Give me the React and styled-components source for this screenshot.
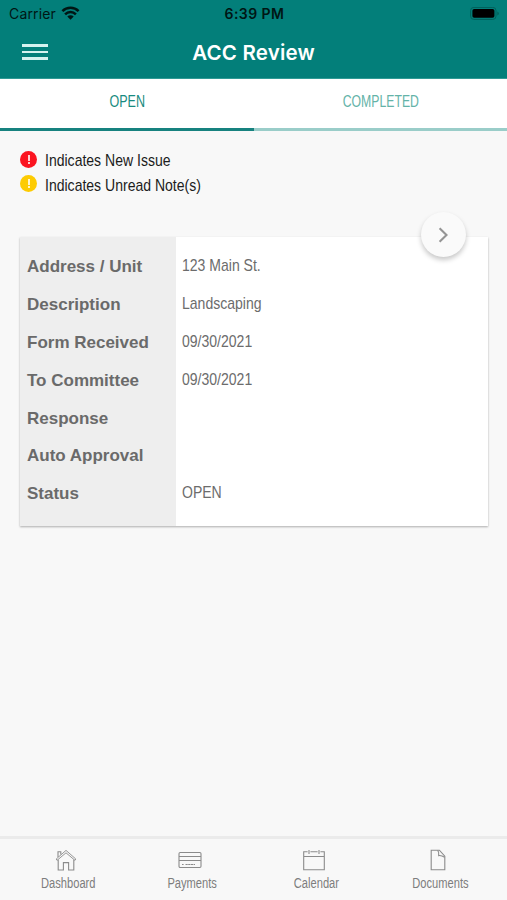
import React from 'react'
import styled, { createGlobalStyle } from 'styled-components'

const rows = [
  { label: 'Address / Unit', value: '123 Main St.' },
  { label: 'Description', value: 'Landscaping' },
  { label: 'Form Received', value: '09/30/2021' },
  { label: 'To Committee', value: '09/30/2021' },
  { label: 'Response', value: '' },
  { label: 'Auto Approval', value: '' },
  { label: 'Status', value: 'OPEN' },
]

const HomeIcon = () => (
  <svg width="24" height="24" viewBox="0 0 24 24">
    <path d="M4.2 11.8V22h5.2v-7.4h5.2V22h5.2V11.8" />
    <path d="M3 12.4 2.2 11 12 2.4l9.8 8.6-.8 1.4L12 4.8z" strokeWidth="0.9" />
    <path d="M4 8.9V3.8h2.8v2.7" />
  </svg>
)

const CardIcon = () => (
  <svg width="24" height="24" viewBox="0 0 24 24">
    <rect x="1" y="4.5" width="22" height="15" rx="1.2" />
    <path d="M1 8.5h22M1 12.5h22" />
    <path d="M4 16.5h1.6M7.5 16.5h9.5" strokeDasharray="2.2 0.5" />
  </svg>
)

const CalendarIcon = () => (
  <svg width="24" height="24" viewBox="0 0 24 24">
    <path d="M5.6 3.7H1.7v18h20.6v-18h-3.9M8.4 3.7h7.2M1.7 8.5h20.6M7 2v4M17 2v4" />
  </svg>
)

const DocumentIcon = () => (
  <svg width="24" height="24" viewBox="0 0 24 24">
    <path d="M5.2 2.2h8.2l5.4 5.9v13.7H5.2z" />
    <path d="M11.6 2.4q1.6 1.4 1.1 5.2 3-.3 5.9 1.6" />
  </svg>
)

const tabs = [
  { name: 'Dashboard', icon: <HomeIcon /> },
  { name: 'Payments', icon: <CardIcon /> },
  { name: 'Calendar', icon: <CalendarIcon /> },
  { name: 'Documents', icon: <DocumentIcon /> },
]

const App = () => {
  return (
    <>
      <GlobalStyle />
      <Screen>
        <Header>
          <StatusBar>
            <Carrier>
              Carrier
              <svg width="19" height="14" viewBox="0 0 19 14">
                <path d="M1.4 5.2a11.5 11.5 0 0 1 16.2 0M4.1 8.3a7.6 7.6 0 0 1 10.8 0" />
                <path d="M9.5 13.7 6.3 10.5a4.5 4.5 0 0 1 6.4 0z" />
              </svg>
            </Carrier>
            <Clock>6:39 PM</Clock>
            <Battery>
              <svg width="30" height="14" viewBox="0 0 30 14">
                <rect x="0.6" y="0.4" width="25.4" height="12" rx="3.2" fill="none" stroke="#00605a" />
                <rect x="2.4" y="2" width="22" height="8.8" rx="1.8" fill="#000" />
                <path d="M27.3 4.4v4q1.5-.5 1.5-2t-1.5-2z" fill="#00605a" />
              </svg>
            </Battery>
          </StatusBar>
          <TitleBar>
            <MenuButton aria-label="Menu">
              <span />
              <span />
              <span />
            </MenuButton>
            <Title>ACC Review</Title>
          </TitleBar>
        </Header>

        <Segments>
          <Segment $active>
            <Narrow $origin="center" $scale={0.8}>OPEN</Narrow>
          </Segment>
          <Segment>
            <Narrow $origin="center" $scale={0.78}>COMPLETED</Narrow>
          </Segment>
        </Segments>

        <Content>
          <Legend>
            <LegendRow>
              <Badge $color="#fb1420">
                <i />
              </Badge>
              <Narrow>Indicates New Issue</Narrow>
            </LegendRow>
            <LegendRow>
              <Badge $color="#fdcb02">
                <i />
              </Badge>
              <Narrow>Indicates Unread Note(s)</Narrow>
            </LegendRow>
          </Legend>

          <Card>
            <Labels>
              {rows.map((row) => (
                <Label key={row.label}>{row.label}</Label>
              ))}
            </Labels>
            <Values>
              {rows.map((row) => (
                <Value key={row.label}>
                  <Narrow>{row.value}</Narrow>
                </Value>
              ))}
            </Values>
            <NextButton aria-label="Next">
              <svg width="12" height="18" viewBox="0 0 12 18">
                <path d="M1.6 2.2 8.5 9l-6.9 6.8" fill="none" stroke="#959595" strokeWidth="2.1" />
              </svg>
            </NextButton>
          </Card>
        </Content>

        <TabBar>
          {tabs.map((tab) => (
            <Tab key={tab.name}>
              {tab.icon}
              <Narrow $origin="center" $scale={0.795}>{tab.name}</Narrow>
            </Tab>
          ))}
        </TabBar>
      </Screen>
    </>
  )
}

const GlobalStyle = createGlobalStyle`
    *{
        box-sizing: border-box;
    }

    body{
        margin: 0;
        font-family: 'Liberation Sans', sans-serif;
    }

    button{
        border: 0;
        padding: 0;
        background: none;
        font-family: inherit;
    }
`

/* condensed text */
const Narrow = styled.span`
    display: inline-block;
    white-space: nowrap;
    transform: scaleX(${(p) => p.$scale || 0.825});
    transform-origin: ${(p) => p.$origin || 'left'};
`

const Screen = styled.div`
    display: flex;
    flex-direction: column;
    width: 507px;
    height: 900px;
    background-color: #f8f8f8;
    overflow: hidden;
`

const Header = styled.header`
    height: 79px;
    flex: none;
    background-color: #037f7a;
    border-bottom: 1px solid #2f9a95;
`

const StatusBar = styled.div`
    display: grid;
    grid-template-columns: 1fr auto 1fr;
    align-items: center;
    height: 27px;
    padding: 0 7px 0 9px;
    font-family: Inter, sans-serif;
    font-size: 14px;
    color: #001614;
`

const Carrier = styled.div`
    display: flex;
    align-items: center;
    gap: 5px;
    letter-spacing: 0.15px;

    svg{
        margin-top: -2px;
        fill: none;
        stroke: #001614;
        stroke-width: 2.5;
    }

    path:last-child{
        fill: #001614;
        stroke: none;
    }
`

const Clock = styled.div`
    font-weight: 600;
    letter-spacing: 0.45px;
`

const Battery = styled.div`
    display: flex;
    justify-content: flex-end;
`

const TitleBar = styled.div`
    display: grid;
    grid-template-columns: 60px 1fr 60px;
    align-items: center;
    height: 50px;
`

const MenuButton = styled.button`
    display: flex;
    flex-direction: column;
    gap: 4px;
    width: 26px;
    margin-left: 22px;

    span{
        height: 2.5px;
        background-color: #d5f3f0;
    }
`

const Title = styled.h1`
    margin: 0;
    text-align: center;
    font-family: Inter, sans-serif;
    font-size: 20.5px;
    font-weight: 600;
    letter-spacing: 0.2px;
    color: #fff;
`

const Segments = styled.nav`
    display: flex;
    height: 52px;
    flex: none;
    background-color: #fff;
`

const Segment = styled.button`
    flex: 1;
    padding: 0 0 4px 1px;
    font-size: 15.7px;
    color: ${(p) => (p.$active ? '#188b80' : '#64b3a8')};
    border-bottom: 3px solid ${(p) => (p.$active ? '#17827f' : '#9acdc9')};
`

const Content = styled.main`
    flex: 1;
    padding: 18px 19px 0 20px;
`

const Legend = styled.div`
    height: 88px;
`

const LegendRow = styled.div`
    display: flex;
    align-items: center;
    gap: 8px;
    height: 24.5px;
    font-size: 17px;
    color: #1c1c1c;
`

const Badge = styled.span`
    display: flex;
    flex-direction: column;
    align-items: center;
    justify-content: center;
    gap: 1px;
    width: 17px;
    height: 17px;
    margin-bottom: 4px;
    border-radius: 50%;
    background-color: ${(p) => p.$color};

    i{
        width: 2px;
        height: 6px;
        background-color: rgba(255, 255, 255, 0.8);
    }

    &::after{
        content: '';
        width: 2px;
        height: 2px;
        background-color: rgba(255, 255, 255, 0.8);
    }
`

const Card = styled.section`
    position: relative;
    display: flex;
    height: 289px;
    background-color: #fff;
    box-shadow: 0 1px 2px rgba(0, 0, 0, 0.3);
`

const Labels = styled.div`
    width: 156px;
    padding: 11px 0 0 7px;
    background-color: #eee;
`

const Values = styled.div`
    flex: 1;
    padding: 10px 0 0 6px;
`

const Label = styled.div`
    height: 37.9px;
    line-height: 38px;
    font-size: 17px;
    font-weight: 700;
    color: #6a6a6a;
`

const Value = styled.div`
    height: 37.9px;
    line-height: 38px;
    font-size: 17px;
    color: #6c6c6c;
`

/* floats over the top edge of the card */
const NextButton = styled.button`
    position: absolute;
    top: -25px;
    right: 22px;
    display: flex;
    align-items: center;
    justify-content: center;
    width: 45px;
    height: 45px;
    border-radius: 50%;
    background-color: #fafafa;
    box-shadow: 0 3px 5px rgba(0, 0, 0, 0.22);
`

const TabBar = styled.footer`
    display: flex;
    height: 64px;
    flex: none;
    padding: 0 5px 0 6px;
    border-top: 3px solid #ebebeb;
`

const Tab = styled.div`
    flex: 1;
    display: flex;
    flex-direction: column;
    align-items: center;
    gap: 3px;
    padding-top: 9px;
    font-size: 14px;
    line-height: 16px;
    color: #7d7d7d;

    svg{
        fill: none;
        stroke: #8b8b8b;
        stroke-width: 1.1;
        margin-right: 4px;
    }
`

export default App
